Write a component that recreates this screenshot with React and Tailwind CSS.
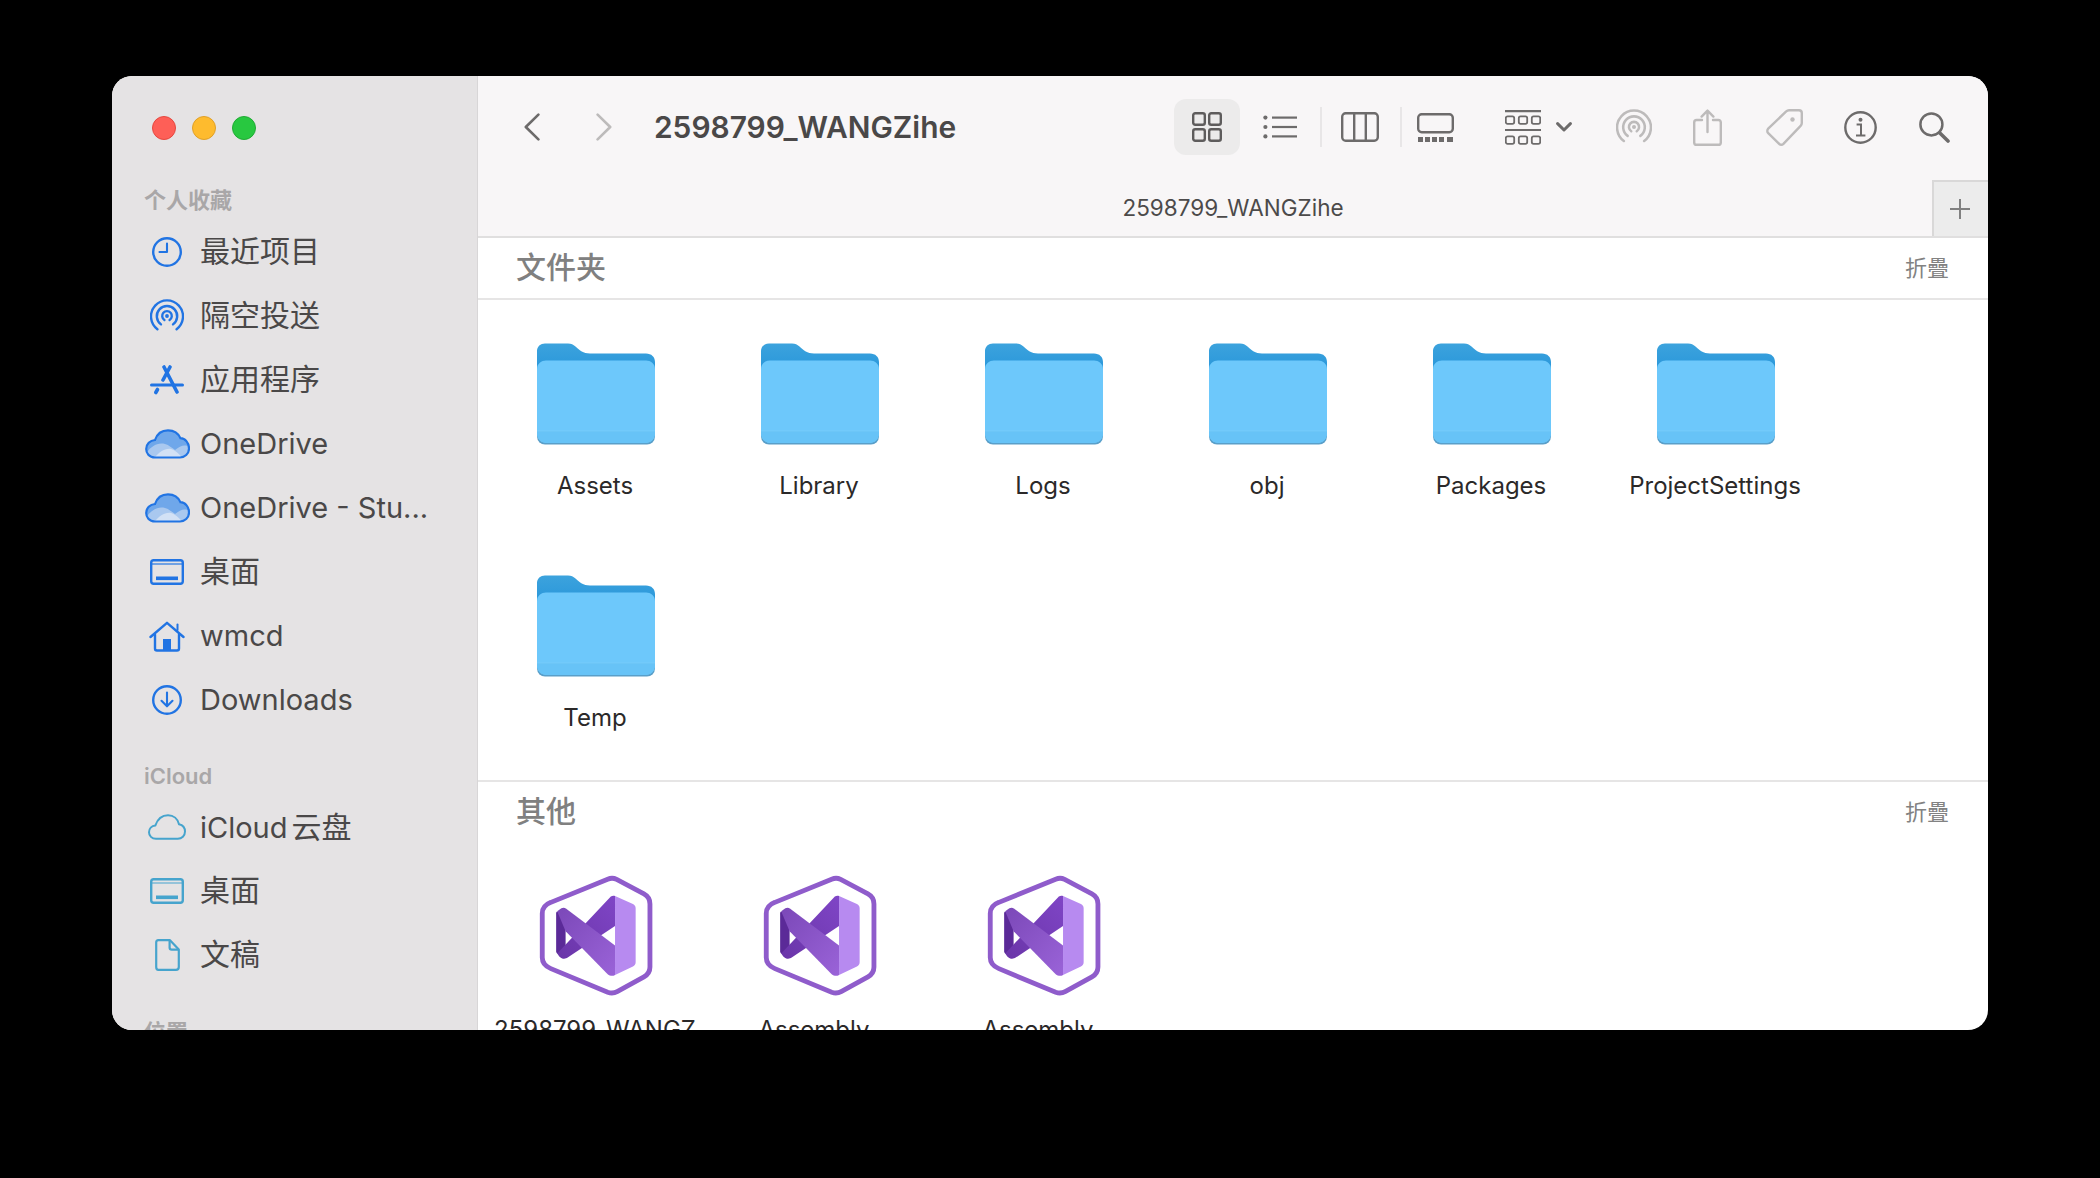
const BLUE = "#2174e3";
const TEAL = "#46a4cd";
const GRAY = "#6d6b6b";
const LIGHT = "#bdbbbb";

function AirdropIcon({ color, size, sw = 2.4 }) {
  return (
    <svg width={size} height={size} viewBox="-17 -17 34 34" fill="none" stroke={color} strokeWidth={sw} strokeLinecap="round">
      <path d="M-9.6 13.2A16 16 0 1 1 9.6 13.2" />
      <path d="M-6 8.4A10.2 10.2 0 1 1 6 8.4" />
      <path d="M-2.6 4A4.8 4.8 0 1 1 2.6 4" />
      <circle cx="0" cy="0" r="1.9" fill={color} stroke="none" />
    </svg>
  );
}
function Clock() {
  return (
    <svg width="32" height="32" viewBox="0 0 32 32" fill="none" stroke={BLUE} strokeWidth="2.4" strokeLinecap="round" strokeLinejoin="round">
      <circle cx="16" cy="16" r="13.8" />
      <path d="M16 7.5V16H8.5" strokeWidth="2.1" />
    </svg>
  );
}
function AppIcon() {
  return (
    <svg width="34" height="30" viewBox="0 0 34 30" fill="none" stroke={BLUE} strokeLinecap="round">
      <path d="M14 2L27 27" strokeWidth="3.6" />
      <path d="M20 2L13 15" strokeWidth="3.6" />
      <path d="M1.5 20H32.5" strokeWidth="3" />
      <path d="M7.5 24.5L5.8 27.5" strokeWidth="3.6" />
    </svg>
  );
}
function OneDriveIcon() {
  const d = "M10 28.5C4 28.5 1.2 24 1.2 20C1.2 15 5 11.4 10 11C12 5 17 1.3 23 1.3C29 1.3 33.4 4.4 35.4 9.2C40.4 9.4 44 14 44 19.4C44 25 39.6 28.5 35 28.5Z";
  return (
    <svg width="45" height="30" viewBox="0 0 45 30">
      <path d={d} fill="#6fa7ea" />
      <path d="M2 23C6 18 12 13 20 15C24 16 27 19 30 21C35 17 40 15 44 18C44 25 39.6 28.5 35 28.5H10C6 28.5 3.4 26 2 23Z" fill="#a9c8ef" />
      <path d="M10 28.5C14 23 20 19 26 20C30 21 34 25 37 28.2Z" fill="#d2e1f5" />
      <path d={d} fill="none" stroke={BLUE} strokeWidth="2.2" />
    </svg>
  );
}
function DesktopIcon({ color }) {
  return (
    <svg width="34" height="26" viewBox="0 0 34 26" fill="none" stroke={color}>
      <rect x="1.2" y="1.2" width="31.6" height="23.6" rx="2.5" strokeWidth="2.4" />
      <path d="M2 5H32" strokeWidth="1.2" />
      <rect x="6" y="17.5" width="22" height="3.6" fill={color} stroke="none" />
    </svg>
  );
}
function HomeIcon() {
  return (
    <svg width="36" height="31" viewBox="0 0 36 31" fill="none" stroke={BLUE} strokeWidth="2.4" strokeLinecap="round" strokeLinejoin="round">
      <path d="M1.5 16L18 1.8L34.5 16" />
      <path d="M28.5 3.5V9" strokeWidth="2" />
      <path d="M6 13.5V27.5C6 28.6 6.8 29.5 8 29.5H28C29.2 29.5 30 28.6 30 27.5V13.5" />
      <rect x="14" y="18" width="8" height="12" fill={BLUE} stroke="none" />
    </svg>
  );
}
function DownloadIcon() {
  return (
    <svg width="32" height="32" viewBox="0 0 32 32" fill="none" stroke={BLUE} strokeWidth="2.4" strokeLinecap="round" strokeLinejoin="round">
      <circle cx="16" cy="16" r="13.8" />
      <path d="M16 8.5V22M10.5 16.8L16 22.3L21.5 16.8" strokeWidth="2.1" />
    </svg>
  );
}
function CloudIcon() {
  return (
    <svg width="38" height="26" viewBox="0 0 38 26" fill="none" stroke={TEAL} strokeWidth="2">
      <path d="M8 24.8C3.8 24.8 1 21.8 1 18.2C1 14.6 3.6 11.8 7.4 11.4C9.4 5.6 14 1.2 20 1.2C25.6 1.2 29.8 5 31 10.2C34.6 11 37 14 37 17.6C37 21.8 33.8 24.8 29.8 24.8Z" />
    </svg>
  );
}
function DocIcon() {
  return (
    <svg width="25" height="32" viewBox="0 0 25 32" fill="none" stroke={TEAL} strokeWidth="2.2" strokeLinejoin="round">
      <path d="M3.4 1.2H15L23.8 10.4V28C23.8 29.6 22.6 30.8 21 30.8H3.4C2.2 30.8 1.2 29.6 1.2 28V3.6C1.2 2.2 2.2 1.2 3.4 1.2Z" />
      <path d="M14.6 1.4V8.4C14.6 9.8 15.6 10.6 16.8 10.6H23.6" />
    </svg>
  );
}
function GridIcon() {
  return (
    <svg width="30" height="30" viewBox="0 0 30 30" fill="none" stroke="#5e5c5c" strokeWidth="2.4">
      <rect x="1.2" y="1.2" width="11.6" height="11.6" rx="2" />
      <rect x="17.2" y="1.2" width="11.6" height="11.6" rx="2" />
      <rect x="1.2" y="17.2" width="11.6" height="11.6" rx="2" />
      <rect x="17.2" y="17.2" width="11.6" height="11.6" rx="2" />
    </svg>
  );
}
function ListIcon() {
  return (
    <svg width="34" height="24" viewBox="0 0 34 24" fill={GRAY}>
      <circle cx="2.4" cy="2.6" r="2.1" />
      <circle cx="2.4" cy="12" r="2.1" />
      <circle cx="2.4" cy="21.4" r="2.1" />
      <rect x="9" y="1.5" width="25" height="2.2" />
      <rect x="9" y="10.9" width="25" height="2.2" />
      <rect x="9" y="20.3" width="25" height="2.2" />
    </svg>
  );
}
function ColumnsIcon() {
  return (
    <svg width="38" height="30" viewBox="0 0 38 30" fill="none" stroke={GRAY} strokeWidth="2.4">
      <rect x="1.2" y="1.2" width="35.6" height="27.6" rx="3.5" />
      <path d="M13.2 1V29M24.8 1V29" />
    </svg>
  );
}
function GalleryIcon() {
  return (
    <svg width="37" height="29" viewBox="0 0 37 29" fill="none" stroke={GRAY} strokeWidth="2.4">
      <rect x="1.2" y="1.2" width="34.6" height="18" rx="3.5" />
      <g fill={GRAY} stroke="none">
        <rect x="1" y="24" width="5" height="5" />
        <rect x="8" y="24" width="5" height="5" />
        <rect x="15" y="24" width="5" height="5" />
        <rect x="22" y="24" width="5" height="5" />
        <rect x="30" y="24" width="6" height="5" />
      </g>
    </svg>
  );
}
function GroupIcon() {
  const Row = ({ y }) => (
    <g>
      <rect x="0.8" y={y} width="8.4" height="7.4" rx="1.8" />
      <rect x="13.8" y={y} width="8.4" height="7.4" rx="1.8" />
      <rect x="26.8" y={y} width="8.4" height="7.4" rx="1.8" />
    </g>
  );
  return (
    <svg width="36" height="35" viewBox="0 0 36 35" fill="none" stroke={GRAY} strokeWidth="1.8">
      <path d="M0 1.2H36M0 20H36" strokeWidth="2.2" />
      <Row y={6.4} />
      <Row y={26.4} />
    </svg>
  );
}
function ShareIcon() {
  return (
    <svg width="29" height="37" viewBox="0 0 29 37" fill="none" stroke={LIGHT} strokeWidth="2.4" strokeLinecap="round" strokeLinejoin="round">
      <path d="M9 11H3.6C2.2 11 1.2 12 1.2 13.4V33.4C1.2 34.8 2.2 35.8 3.6 35.8H25.4C26.8 35.8 27.8 34.8 27.8 33.4V13.4C27.8 12 26.8 11 25.4 11H20" />
      <path d="M14.5 23V1.8M8.6 7.6L14.5 1.6L20.4 7.6" />
    </svg>
  );
}
function TagIcon() {
  return (
    <svg width="37" height="37" viewBox="0 0 37 37" fill="none" stroke={LIGHT} strokeWidth="2.4" strokeLinejoin="round">
      <path d="M2.2 19.6L20.2 2.4C21 1.6 22 1.2 23 1.2H33C34.6 1.2 35.8 2.4 35.8 4V14C35.8 15 35.4 16 34.6 16.8L17.4 34.8C16.2 36 14.4 36 13.2 34.8L2.2 24.2C1 23 1 20.8 2.2 19.6Z" />
      <circle cx="26.5" cy="10.5" r="2.2" fill={LIGHT} stroke="none" />
    </svg>
  );
}
function InfoIcon() {
  return (
    <svg width="33" height="33" viewBox="0 0 33 33" fill="none" stroke={GRAY}>
      <circle cx="16.5" cy="16.5" r="15.2" strokeWidth="2.4" />
      <circle cx="16.5" cy="8.8" r="2" fill={GRAY} stroke="none" />
      <path d="M12.6 13.6H17V24.4M12 24.6H21.4" strokeWidth="2" />
    </svg>
  );
}
function SearchIcon() {
  return (
    <svg width="31" height="31" viewBox="0 0 31 31" fill="none" stroke={GRAY} strokeLinecap="round">
      <circle cx="12.4" cy="12.4" r="11" strokeWidth="2.5" />
      <path d="M20.6 20.8L29 29" strokeWidth="3.6" />
    </svg>
  );
}
function ChevronLeft({ color, flip }) {
  return (
    <svg width="16" height="28" viewBox="0 0 16 28" fill="none" stroke={color} strokeWidth="2.6" strokeLinecap="round" strokeLinejoin="round" className={flip ? "rotate-180" : ""}>
      <path d="M14.4 1.6L1.8 14L14.4 26.4" />
    </svg>
  );
}
function ChevronSmall() {
  return (
    <svg width="16" height="10" viewBox="0 0 16 10" fill="none" stroke={GRAY} strokeWidth="3" strokeLinecap="round" strokeLinejoin="round">
      <path d="M1.6 1.6L8 8L14.4 1.6" />
    </svg>
  );
}
function Folder({ id }) {
  return (
    <svg width="120" height="103" viewBox="0 0 120 103" className="block ml-[1px]">
      <defs>
        <linearGradient id={"fb" + id} x1="0" y1="0" x2="0" y2="1">
          <stop offset="0" stopColor="#3ca3dd" />
          <stop offset="1" stopColor="#1a8cd8" />
        </linearGradient>
      </defs>
      <path d="M1 8C1 3.5 4.5 0.5 9 0.5H32C35.5 0.5 37 1.5 39.5 3.5C44 7.4 47 10.5 54 10.5H110C115.5 10.5 119 14 119 19V50H1Z" fill={"url(#fb" + id + ")"} />
      <rect x="1" y="60" width="118" height="41.5" rx="8" fill="#5a9fc9" />
      <path d="M1 26C1 20.5 5.5 17.5 10 17.5H110C114.5 17.5 119 20.5 119 26V90C119 96 115 100 109 100H11C5 100 1 96 1 90Z" fill="#6dc8fb" />
      <path d="M1 88H119V90C119 96 115 100 109 100H11C5 100 1 96 1 90Z" fill="#67c3f7" />
      <path d="M1 88H119" stroke="#8ad4fb" strokeWidth="1" opacity="0.4" />
    </svg>
  );
}
function VSIcon({ id }) {
  return (
    <svg width="122" height="131" viewBox="0 0 116 124" className="block shrink-0 mr-[2px]">
      <defs>
        <linearGradient id={"vb" + id} x1="0" y1="1" x2="1" y2="0">
          <stop offset="0" stopColor="#6a35a8" />
          <stop offset="1" stopColor="#7f45c6" />
        </linearGradient>
        <linearGradient id={"vc" + id} x1="0" y1="0" x2="1" y2="1">
          <stop offset="0" stopColor="#7b48b8" />
          <stop offset="1" stopColor="#9a63d8" />
        </linearGradient>
      </defs>
      <path d="M17 30.5L71 8.5C74 7.2 77 7.4 79.5 8.7L105.5 22.5C109 24.4 111.2 27.6 111.2 32V92C111.2 96 109 99.4 105.5 101.4L80 115.4C77 117 74 117 71 116L17 93.5C12 91.5 8.8 88 8.8 83V41C8.8 36 12 32.5 17 30.5Z" fill="#fff" stroke="#8f5ccb" strokeWidth="4.6" />
      <path d="M23 39.5L31 43V83L23 79C22.4 78.6 22 78 22 77V41C22 40 22.4 39.4 23 39.5Z" fill="#5b2a98" />
      <path d="M78 24.5V53L33 83C31 84.4 28 85 25 82L23 79L74 25C75.5 24 76.8 24 78 24.5Z" fill={"url(#vb" + id + ")"} />
      <path d="M23 39L27 36.2C28.6 35.4 30.2 35.6 31.6 36.6L78 71.5V99.5C76 100.8 73.2 100.6 71 98.8L31 58Z" fill={"url(#vc" + id + ")"} />
      <path d="M78 24.5L95 32C96.6 32.8 97.6 34 97.6 36V87.5C97.6 89.4 96.6 90.8 95 91.5L78 99.5Z" fill="#b78af0" />
    </svg>
  );
}

const cjk = "font-['Inter','Noto_Sans_CJK_SC',sans-serif]";

function SideHead({ children, className = "" }) {
  return (
    <div className={"h-8 pl-8 flex items-center text-[22px] font-semibold text-[#a9a7a8] " + className}>{children}</div>
  );
}
function SideRow({ icon, label, zh }) {
  return (
    <div className="h-16 pl-8 flex items-center">
      <div className="w-[46px] flex justify-center items-center shrink-0">{icon}</div>
      <span className={"ml-[10px] text-[#4a4848] whitespace-nowrap " + (zh ? "text-[30px] mb-[2px]" : "text-[29px]")}>{label}</span>
    </div>
  );
}
function Sep({ className }) {
  return <div className={"w-[2px] h-[40px] bg-[#e8e6e7] " + className}></div>;
}
function Section({ title, children, className = "" }) {
  return (
    <div className={className}>
      <div className="flex items-center justify-between pl-[38px] pr-[39px] h-[60px]">
        <span className="text-[30px] font-medium text-[#808080] mb-[2px]">{title}</span>
        <span className="text-[22px] text-[#828282]">折疊</span>
      </div>
      {children}
    </div>
  );
}
function Item({ icon, label }) {
  return (
    <div className="flex flex-col items-center">
      <div className="h-[100px] flex items-start justify-center">{icon}</div>
      <div className="mt-[27px] h-8 leading-8 text-[24px] text-[#2b2929] whitespace-nowrap">{label}</div>
    </div>
  );
}
function VSCell({ id, label }) {
  return (
    <div className="flex flex-col items-center">
      <div className="h-[120px] flex items-center justify-center"><VSIcon id={id} /></div>
      <div className="mt-[19px] h-8 leading-8 text-[24px] text-[#2b2929] whitespace-nowrap">{label}</div>
    </div>
  );
}

export default function App() {
  const folders = ["Assets", "Library", "Logs", "obj", "Packages", "ProjectSettings", "Temp"];
  return (
    <div className={"w-[2100px] h-[1178px] bg-black pt-[76px] pl-[112px] overflow-hidden " + cjk}>
      <div className="w-[1876px] h-[954px] rounded-[20px] overflow-hidden flex bg-white">
        <aside className="w-[366px] h-full shrink-0 bg-[#e5e3e4] border-r border-[#d8d6d7] overflow-hidden">
          <div className="pt-10 pl-10 flex gap-4">
            <div className="w-6 h-6 rounded-full bg-[#fe5f57] border border-[#e5483f]"></div>
            <div className="w-6 h-6 rounded-full bg-[#febb2e] border border-[#e0a028]"></div>
            <div className="w-6 h-6 rounded-full bg-[#28c840] border border-[#20ab34]"></div>
          </div>
          <SideHead className="mt-[44px]">个人收藏</SideHead>
          <div className="mt-1">
            <SideRow zh icon={<Clock />} label="最近项目" />
            <SideRow zh icon={<AirdropIcon color={BLUE} size={34} />} label="隔空投送" />
            <SideRow zh icon={<AppIcon />} label="应用程序" />
            <SideRow icon={<OneDriveIcon />} label="OneDrive" />
            <SideRow icon={<OneDriveIcon />} label="OneDrive - Stu..." />
            <SideRow zh icon={<DesktopIcon color={BLUE} />} label="桌面" />
            <SideRow icon={<HomeIcon />} label="wmcd" />
            <SideRow icon={<DownloadIcon />} label="Downloads" />
          </div>
          <SideHead className="mt-[28px]">iCloud</SideHead>
          <div className="mt-[3px]">
            <SideRow icon={<CloudIcon />} label={<>iCloud<span className="ml-[4px] text-[30px]">云盘</span></>} />
            <SideRow zh icon={<DesktopIcon color={TEAL} />} label="桌面" />
            <SideRow zh icon={<DocIcon />} label="文稿" />
          </div>
          <SideHead className="mt-[29px]">位置</SideHead>
        </aside>
        <main className="flex-1 h-full flex flex-col overflow-hidden">
          <div className="bg-[#f8f6f7] border-b-2 border-[#e0dfdf]">
            <div className="h-[104px] pb-[2px] flex items-center justify-between pr-[38px]">
              <div className="flex items-center pl-[46px]">
                <ChevronLeft color={GRAY} />
                <div className="ml-[56px]"><ChevronLeft color={LIGHT} flip /></div>
                <span className="ml-[42px] text-[29.9px] font-semibold text-[#4a4848] whitespace-nowrap">2598799_WANGZihe</span>
              </div>
              <div className="flex items-center">
                <div className="w-[66px] h-[56px] rounded-xl bg-[#ecebeb] flex items-center justify-center"><GridIcon /></div>
                <div className="ml-[23px]"><ListIcon /></div>
                <Sep className="ml-[23px]" />
                <div className="ml-[19px]"><ColumnsIcon /></div>
                <Sep className="ml-[21px]" />
                <div className="ml-[15px]"><GalleryIcon /></div>
                <div className="ml-[51px]"><GroupIcon /></div>
                <div className="ml-[15px]"><ChevronSmall /></div>
                <div className="ml-[44px]"><AirdropIcon color={LIGHT} size={36} /></div>
                <div className="ml-[41px]"><ShareIcon /></div>
                <div className="ml-[44px]"><TagIcon /></div>
                <div className="ml-[41px]"><InfoIcon /></div>
                <div className="ml-[42px]"><SearchIcon /></div>
              </div>
            </div>
            <div className="h-[56px] flex items-stretch">
              <div className="flex-1 pl-[56px] flex items-center justify-center text-[22.5px] text-[#4c4a4a]">2598799_WANGZihe</div>
              <div className="w-[56px] pr-[3px] bg-[#ececec] border-l-2 border-t-2 border-[#d9d8d8] flex items-center justify-center">
                <svg width="22" height="22" viewBox="0 0 22 22" stroke="#808080" strokeWidth="2"><path d="M11 1V21M1 11H21" /></svg>
              </div>
            </div>
          </div>
          <Section title="文件夹" className="border-b-2 border-[#e6e5e5] pb-[46px]">
            <div className="border-t-2 border-[#e6e5e5] pt-[43px] pl-[5px] grid grid-cols-[repeat(6,224px)] gap-y-[73px]">
              {folders.map((f, i) => (
                <Item key={f} icon={<Folder id={i} />} label={f} />
              ))}
            </div>
          </Section>
          <Section title="其他">
            <div className="pt-[33px] pl-[5px] grid grid-cols-[repeat(6,224px)]">
              <VSCell id="a" label="2598799_WANGZ" />
              <VSCell id="b" label="Assembly-" />
              <VSCell id="c" label="Assembly-" />
            </div>
          </Section>
        </main>
      </div>
    </div>
  );
}
